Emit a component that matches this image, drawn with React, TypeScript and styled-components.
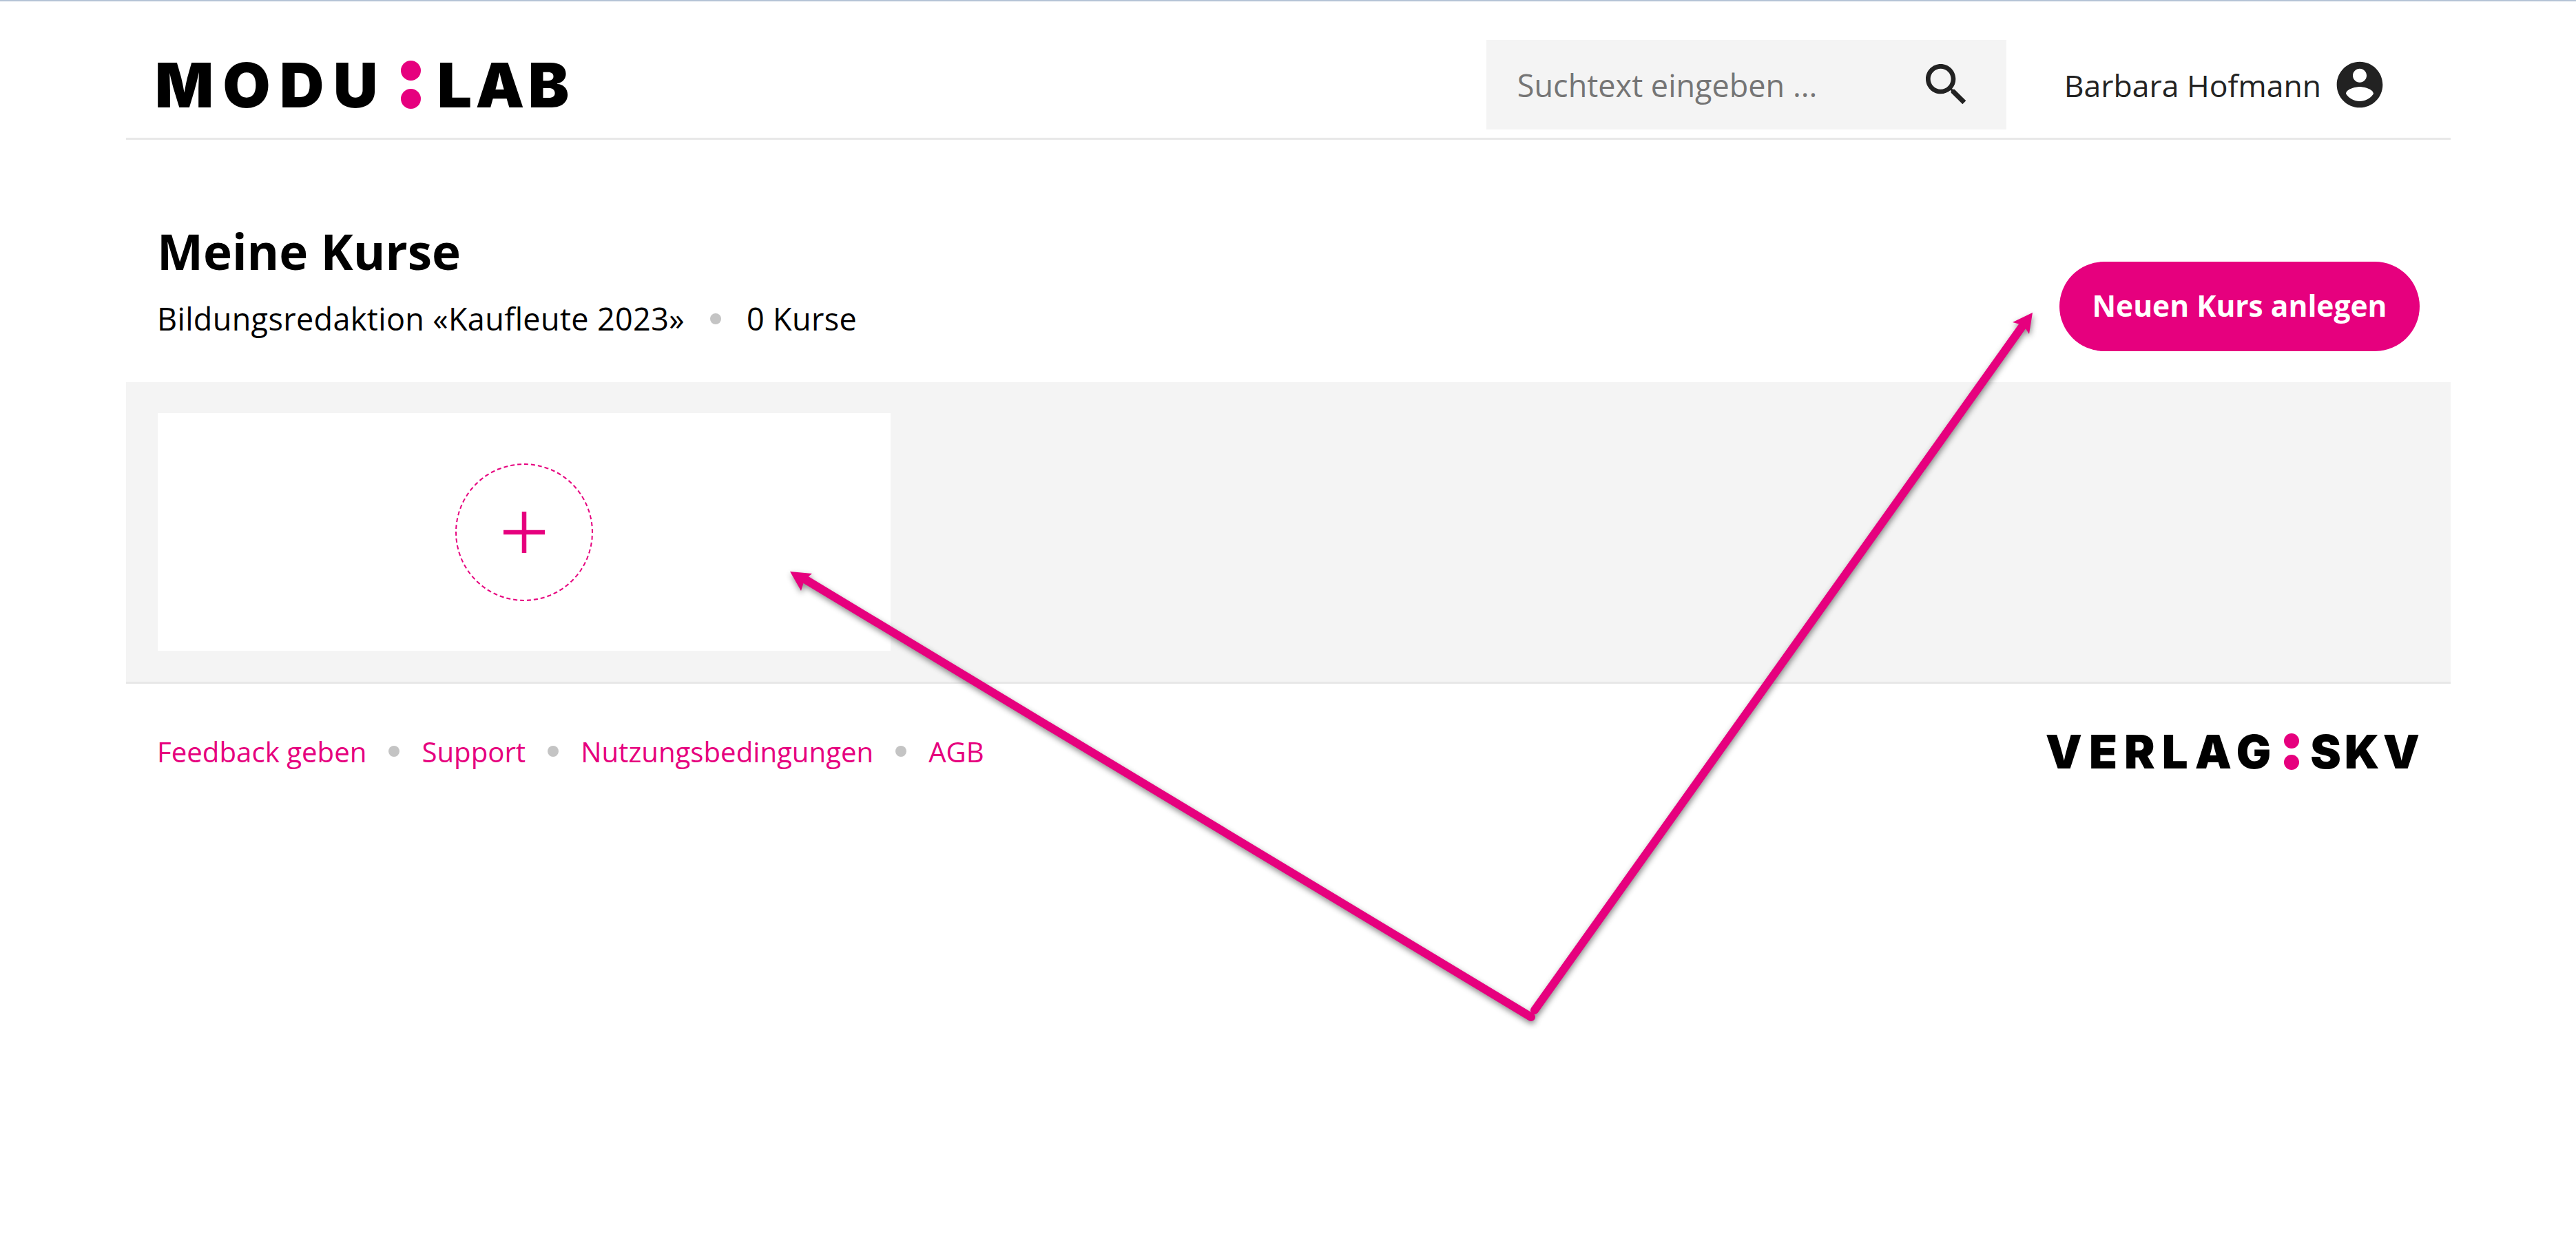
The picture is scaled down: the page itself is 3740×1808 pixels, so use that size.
import React from "react";
import styled, { createGlobalStyle } from "styled-components";

const PINK = "#e6007e";
const BODY_FONT = `"Open Sans", "Noto Sans", "Liberation Sans", sans-serif`;

const Global = createGlobalStyle`
  html, body { margin: 0; padding: 0; background: #fff; }
  body { font-family: ${BODY_FONT}; color: #000; }
`;

const Page = styled.div`
  position: relative;
  width: 3740px;
  height: 1808px;
  box-sizing: border-box;
  overflow: hidden;
  border-top: 2px solid #b4c3d6;
  padding: 0 182px 0 183px;
`;

const Header = styled.header`
  display: flex;
  align-items: center;
  height: 201px;
  box-sizing: border-box;
  padding: 56px 92px 12px 42px;
  border-bottom: 3px solid #e8e8e8;
`;

const LogoMark = styled.div<{ $size: number }>`
  display: flex;
  align-items: center;
  font-family: Inter, "Liberation Sans", sans-serif;
  font-weight: 900;
  font-size: ${(p) => p.$size}px;
  line-height: 1;
  color: #000;
`;

const LogoWord = styled.span<{ $spacing: number }>`
  letter-spacing: ${(p) => p.$spacing}px;
`;

const Colon = styled.span<{ $dot: number; $between: number; $left: number; $right: number }>`
  display: flex;
  flex-direction: column;
  gap: ${(p) => p.$between}px;
  margin: 0 ${(p) => p.$right}px 0 ${(p) => p.$left}px;
  &::before, &::after {
    content: "";
    width: ${(p) => p.$dot}px;
    height: ${(p) => p.$dot}px;
    border-radius: 50%;
    background: ${PINK};
  }
`;

const Search = styled.div`
  display: flex;
  align-items: center;
  justify-content: space-between;
  width: 755px;
  height: 130px;
  margin-left: auto;
  padding: 0 47px 0 45px;
  box-sizing: border-box;
  background: #f4f4f4;
  font-size: 45px;
  color: #757575;
`;

const SearchIcon = styled.svg`
  width: 80px;
  height: 80px;
  fill: #222;
`;

const User = styled.div`
  display: flex;
  align-items: center;
  gap: 16px;
  margin-left: 84px;
  font-size: 44.5px;
  color: #222;
`;

const Avatar = styled.svg`
  width: 80px;
  height: 80px;
  fill: #222;
`;

const TitleRow = styled.section`
  display: flex;
  align-items: flex-end;
  justify-content: space-between;
  height: 352px;
  box-sizing: border-box;
  padding: 0 45px 45px;
`;

const TitleBlock = styled.div`
  margin-bottom: 17px;
`;

const Heading = styled.h1`
  margin: 0 0 18px;
  font-size: 71px;
  font-weight: 700;
  line-height: 100px;
`;

const Meta = styled.div`
  display: flex;
  align-items: center;
  gap: 37px;
  font-size: 45px;
  letter-spacing: 0.35px;
  line-height: 60px;
`;

const Dot = styled.span`
  flex: none;
  width: 16px;
  height: 16px;
  border-radius: 50%;
  background: #c4c4c4;
`;

const PrimaryButton = styled.button`
  height: 130px;
  width: 523px;
  padding: 0 0 4px;
  border: 0;
  border-radius: 65px;
  background: ${PINK};
  color: #fff;
  font-family: ${BODY_FONT};
  font-size: 42.5px;
  font-weight: 700;
`;

const Band = styled.section`
  padding: 45px 46px;
  background: #f4f4f4;
  border-bottom: 3px solid #e8e8e8;
`;

const AddCard = styled.div`
  display: flex;
  align-items: center;
  justify-content: center;
  width: 1064px;
  height: 345px;
  background: #fff;
`;

const AddCircle = styled.div`
  display: flex;
  align-items: center;
  justify-content: center;
  width: 200px;
  height: 200px;
  box-sizing: border-box;
  border: 2px dashed ${PINK};
  border-radius: 50%;
`;

const PlusIcon = styled.svg`
  width: 60px;
  height: 60px;
  stroke: ${PINK};
  stroke-width: 6.5;
`;

const Footer = styled.footer`
  display: flex;
  align-items: center;
  justify-content: space-between;
  height: 196px;
  box-sizing: border-box;
  padding: 0 40px 0 45px;
`;

const FooterLinks = styled.nav`
  display: flex;
  align-items: center;
  gap: 32px;
  font-size: 40.2px;
  color: ${PINK};
`;

const Arrows = styled.svg`
  position: absolute;
  top: 0;
  left: 0;
  width: 3740px;
  height: 1808px;
  pointer-events: none;
  filter: drop-shadow(1px 4px 4px rgba(0, 0, 0, 0.45));
`;

export default function App() {
  const links = ["Feedback geben", "Support", "Nutzungsbedingungen", "AGB"];
  return (
    <>
      <Global />
      <Page>
        <Header>
          <LogoMark $size={89}>
            <LogoWord $spacing={13.5}>MODU</LogoWord>
            <Colon $dot={29} $between={12} $left={20} $right={24} />
            <LogoWord $spacing={5.5}>LAB</LogoWord>
          </LogoMark>
          <Search>
            <span>Suchtext eingeben ...</span>
            <SearchIcon viewBox="0 0 24 24">
              <path d="M15.5 14h-.79l-.28-.27C15.41 12.59 16 11.11 16 9.5 16 5.91 13.09 3 9.5 3S3 5.91 3 9.5 5.91 16 9.5 16c1.61 0 3.09-.59 4.23-1.57l.27.28v.79l5 4.99L20.49 19l-4.99-5zm-6 0C7.01 14 5 11.99 5 9.5S7.01 5 9.5 5 14 7.01 14 9.5 11.99 14 9.5 14z" />
            </SearchIcon>
          </Search>
          <User>
            <span>Barbara Hofmann</span>
            <Avatar viewBox="0 0 24 24">
              <path d="M12 2C6.48 2 2 6.48 2 12s4.48 10 10 10 10-4.48 10-10S17.52 2 12 2zm0 3c1.66 0 3 1.34 3 3s-1.34 3-3 3-3-1.34-3-3 1.34-3 3-3zm0 14.2c-2.5 0-4.71-1.28-6-3.22.03-1.99 4-3.08 6-3.08 1.99 0 5.97 1.09 6 3.08-1.29 1.94-3.5 3.22-6 3.22z" />
            </Avatar>
          </User>
        </Header>

        <TitleRow>
          <TitleBlock>
            <Heading>Meine Kurse</Heading>
            <Meta>
              <span>Bildungsredaktion «Kaufleute 2023»</span>
              <Dot />
              <span>0 Kurse</span>
            </Meta>
          </TitleBlock>
          <PrimaryButton>Neuen Kurs anlegen</PrimaryButton>
        </TitleRow>

        <Band>
          <AddCard>
            <AddCircle>
              <PlusIcon viewBox="0 0 60 60">
                <path d="M0 30H60M30 0V60" fill="none" />
              </PlusIcon>
            </AddCircle>
          </AddCard>
        </Band>

        <Footer>
          <FooterLinks>
            {links.map((l, i) => (
              <React.Fragment key={l}>
                {i > 0 && <Dot />}
                <span>{l}</span>
              </React.Fragment>
            ))}
          </FooterLinks>
          <LogoMark $size={67}>
            <LogoWord $spacing={10}>VERLAG</LogoWord>
            <Colon $dot={22} $between={9} $left={9} $right={16} />
            <LogoWord $spacing={5}>SKV</LogoWord>
          </LogoMark>
        </Footer>

        <Arrows viewBox="0 0 3740 1808">
          <g fill={PINK} stroke={PINK} strokeLinecap="round">
            <line x1="2223" y1="1475" x2="1170" y2="840" strokeWidth="12" />
            <polygon points="1147,828 1179,831 1168,840 1163,856" stroke="none" />
            <line x1="2228" y1="1465" x2="2936" y2="472" strokeWidth="12" />
            <polygon points="2951,452 2922,466 2933,469 2940,474 2946,483" stroke="none" />
          </g>
        </Arrows>
      </Page>
    </>
  );
}
